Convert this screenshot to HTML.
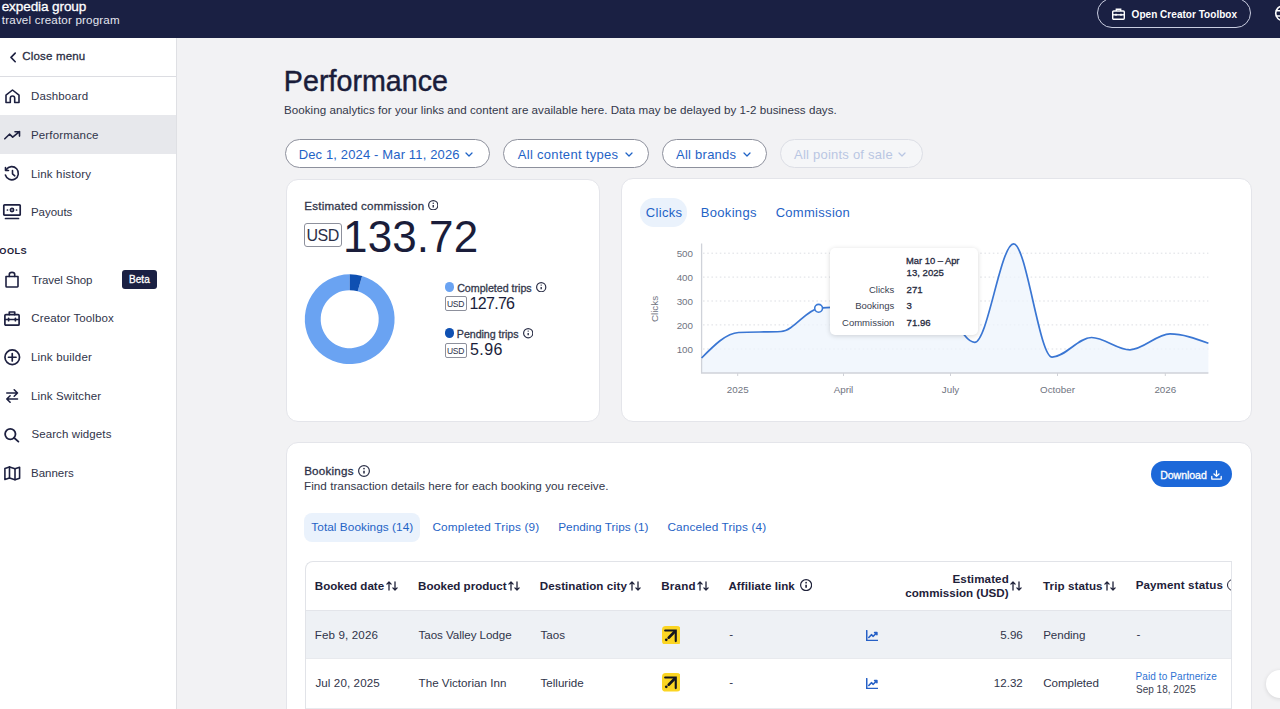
<!DOCTYPE html>
<html><head><meta charset="utf-8"><style>
html,body{margin:0;padding:0;width:1280px;height:709px;overflow:hidden;position:relative;font-family:"Liberation Sans",sans-serif;}
.t{position:absolute;white-space:nowrap;line-height:1;font-family:"Liberation Sans",sans-serif;}
</style></head><body>
<div style="position:absolute;left:0px;top:0px;width:1280px;height:709px;background:#f2f2f4"></div>
<div style="position:absolute;left:0px;top:0px;width:1280px;height:37.5px;background:#1a2043"></div>
<div class="t" style="left:1.66px;top:-0.26px;font-size:13.6px;font-weight:400;color:#ffffff;letter-spacing:-0.122px;-webkit-text-stroke:0.55px #ffffff;-webkit-text-stroke:0.3px #ffffff;">expedia group</div>
<div class="t" style="left:1.83px;top:14.28px;font-size:11.6px;font-weight:400;color:#e4e6f0;letter-spacing:0.180px;">travel creator program</div>
<div style="position:absolute;left:1097px;top:-2px;width:154px;height:30px;border:1.3px solid #c9cde0;border-radius:16px;box-sizing:border-box"></div>
<svg style="position:absolute;left:1112px;top:8px" width="13" height="12" viewBox="0 0 13 12" fill="none" stroke="#fff" stroke-width="1.4">
<rect x="0.7" y="3" width="11.6" height="8.3" rx="1"/><path d="M4.3 3V1.2h4.4V3"/><path d="M0.7 6.8h11.6"/><path d="M4 5.8v2M9 5.8v2"/></svg>
<div class="t" style="left:1131.60px;top:10.14px;font-size:10px;font-weight:700;color:#ffffff;letter-spacing:0.034px;">Open Creator Toolbox</div>
<svg style="position:absolute;left:1274px;top:5px" width="18" height="17" viewBox="0 0 18 17" fill="none" stroke="#fff" stroke-width="1.6"><circle cx="9" cy="8.3" r="7.3"/><path d="M1.8 5.8h14.4M1.8 11h14.4M9 1c-2.6 2.6-2.6 12 0 14.6"/></svg>
<div style="position:absolute;left:0px;top:37.5px;width:177px;height:672px;background:#ffffff;border-right:1.5px solid #dfe0e4;box-sizing:border-box"></div>
<div style="position:absolute;left:0px;top:75.5px;width:176px;height:1px;background:#dcdde2"></div>
<svg style="position:absolute;left:8.9px;top:52px" width="8" height="11" viewBox="0 0 8 11" fill="none" stroke="#1d2040" stroke-width="1.6" stroke-linecap="round" stroke-linejoin="round"><path d="M6.2 1.1L2 5.4l4.2 4.3"/></svg>
<div class="t" style="left:22.32px;top:51.37px;font-size:11.5px;font-weight:400;color:#2a2e44;letter-spacing:0.174px;-webkit-text-stroke:0.3px #2a2e44;">Close menu</div>
<div style="position:absolute;left:0px;top:115px;width:176px;height:39px;background:#e7e8ec"></div>
<div class="t" style="left:30.98px;top:91.17px;font-size:11.5px;font-weight:400;color:#30344a;letter-spacing:0.117px;">Dashboard</div>
<div class="t" style="left:30.98px;top:129.87px;font-size:11.5px;font-weight:400;color:#30344a;letter-spacing:0.170px;">Performance</div>
<div class="t" style="left:30.98px;top:168.87px;font-size:11.5px;font-weight:400;color:#30344a;letter-spacing:0.166px;">Link history</div>
<div class="t" style="left:30.98px;top:207.07px;font-size:11.5px;font-weight:400;color:#30344a;letter-spacing:-0.025px;">Payouts</div>
<div class="t" style="left:31.67px;top:274.77px;font-size:11.5px;font-weight:400;color:#30344a;letter-spacing:-0.079px;">Travel Shop</div>
<div class="t" style="left:31.32px;top:313.07px;font-size:11.5px;font-weight:400;color:#30344a;letter-spacing:0.102px;">Creator Toolbox</div>
<div class="t" style="left:30.98px;top:352.27px;font-size:11.5px;font-weight:400;color:#30344a;letter-spacing:0.184px;">Link builder</div>
<div class="t" style="left:30.98px;top:390.97px;font-size:11.5px;font-weight:400;color:#30344a;letter-spacing:0.152px;">Link Switcher</div>
<div class="t" style="left:31.38px;top:429.47px;font-size:11.5px;font-weight:400;color:#30344a;letter-spacing:0.109px;">Search widgets</div>
<div class="t" style="left:30.98px;top:468.17px;font-size:11.5px;font-weight:400;color:#30344a;letter-spacing:-0.002px;">Banners</div>
<div class="t" style="left:-6.60px;top:246.81px;font-size:9.2px;font-weight:700;color:#1d2038;letter-spacing:0.450px;">TOOLS</div>
<div style="position:absolute;left:122.4px;top:270px;width:34.5px;height:19px;background:#1a2043;border-radius:3px"></div>
<div class="t" style="left:128.90px;top:274.74px;font-size:10px;font-weight:400;color:#ffffff;letter-spacing:0.117px;-webkit-text-stroke:0.3px #ffffff;">Beta</div>
<svg style="position:absolute;left:4.5px;top:88.5px;overflow:visible" width="15" height="14.5" viewBox="0 0 15 14.5" fill="none" stroke="#1d2040" stroke-width="1.6" stroke-linecap="round" stroke-linejoin="round"><path d="M1 6.2L7.5 1l6.5 5.2V13.5H9.7V9.2a2.2 2.2 0 0 0-4.4 0v4.3H1z"/></svg>
<svg style="position:absolute;left:4px;top:130.8px;overflow:visible" width="16.5" height="8.5" viewBox="0 0 16.5 8.5" fill="none" stroke="#1d2040" stroke-width="1.6" stroke-linecap="round" stroke-linejoin="round"><path d="M0.8 7.8L5.5 3.2l3.2 3 6.8-5.6M11 0.8h4.5v4.3"/></svg>
<svg style="position:absolute;left:4px;top:165.7px;overflow:visible" width="16" height="15" viewBox="0 0 16 15" fill="none" stroke="#1d2040" stroke-width="1.6" stroke-linecap="round" stroke-linejoin="round"><path d="M2.3 3.5A6.6 6.6 0 1 1 1.4 9"/><path d="M1.5 1.5v3h3"/><path d="M8.5 4.5v3.3l2.3 2"/></svg>
<svg style="position:absolute;left:3.2px;top:203.8px;overflow:visible" width="18" height="16" viewBox="0 0 18 16" fill="none" stroke="#1d2040" stroke-width="1.7" stroke-linecap="round" stroke-linejoin="round"><rect x="0.8" y="0.8" width="16.4" height="10.4" rx="0.8"/><circle cx="9" cy="6" r="1.6"/><path d="M4.4 6h0.1M13.5 6h0.1M2.5 14.5h13"/></svg>
<svg style="position:absolute;left:5.2px;top:272px;overflow:visible" width="14" height="15.5" viewBox="0 0 14 15.5" fill="none" stroke="#1d2040" stroke-width="1.6" stroke-linecap="round" stroke-linejoin="round"><path d="M1 4.5h12v9.8a0.7 0.7 0 0 1-0.7 0.7H1.7a0.7 0.7 0 0 1-0.7-0.7z"/><path d="M4.3 4.5V2.4a2.7 2 0 0 1 5.4 0v2.1"/></svg>
<svg style="position:absolute;left:4.2px;top:310.5px;overflow:visible" width="16" height="15" viewBox="0 0 16 15" fill="none" stroke="#1d2040" stroke-width="1.7" stroke-linecap="round" stroke-linejoin="round"><rect x="0.9" y="3.6" width="14.2" height="10.6" rx="1"/><path d="M5.3 3.6V1h5.4v2.6"/><path d="M0.9 8.5h14.2"/><path d="M4.6 7.3v2.4M11.4 7.3v2.4"/></svg>
<svg style="position:absolute;left:3.8px;top:348.9px;overflow:visible" width="16.5" height="16.5" viewBox="0 0 16.5 16.5" fill="none" stroke="#1d2040" stroke-width="1.7" stroke-linecap="round" stroke-linejoin="round"><circle cx="8.25" cy="8.25" r="7.3"/><path d="M8.25 4.5v7.5M4.5 8.25h7.5"/></svg>
<svg style="position:absolute;left:5.7px;top:388.7px;overflow:visible" width="12.5" height="14" viewBox="0 0 12.5 14" fill="none" stroke="#1d2040" stroke-width="1.6" stroke-linecap="round" stroke-linejoin="round"><path d="M0.8 4h10.7M8.2 0.8L11.5 4 8.2 7.2M11.5 10H0.8M4.1 6.8L0.8 10l3.3 3.2"/></svg>
<svg style="position:absolute;left:3.8px;top:427.8px;overflow:visible" width="15.5" height="14" viewBox="0 0 15.5 14" fill="none" stroke="#1d2040" stroke-width="1.8" stroke-linecap="round" stroke-linejoin="round"><circle cx="6.3" cy="6.1" r="5.2"/><path d="M10 9.8l4.4 3.8"/></svg>
<svg style="position:absolute;left:3.8px;top:466px;overflow:visible" width="16.5" height="14.5" viewBox="0 0 16.5 14.5" fill="none" stroke="#1d2040" stroke-width="1.6" stroke-linecap="round" stroke-linejoin="round"><path d="M0.9 2.4L5.5 0.9l5.5 1.8 4.6-1.5v11L11 13.7l-5.5-1.8-4.6 1.5z"/><path d="M5.5 0.9v11M11 2.7v11"/></svg>
<div class="t" style="left:283.81px;top:66.69px;font-size:28.6px;font-weight:400;color:#1a1d3a;letter-spacing:0.054px;-webkit-text-stroke:0.45px #1a1d3a;">Performance</div>
<div class="t" style="left:284.07px;top:103.78px;font-size:11.6px;font-weight:400;color:#33374a;letter-spacing:0.028px;">Booking analytics for your links and content are available here. Data may be delayed by 1-2 business days.</div>
<div style="position:absolute;left:285.3px;top:139.4px;width:204.3px;height:29px;border:1px solid #8d909c;border-radius:15px;box-sizing:border-box;background:#ffffff"></div>
<div class="t" style="left:298.66px;top:148.00px;font-size:13px;font-weight:400;color:#1f63c6;letter-spacing:0.142px;">Dec 1, 2024 - Mar 11, 2026</div>
<div style="position:absolute;left:503.3px;top:139.4px;width:145.7px;height:29px;border:1px solid #8d909c;border-radius:15px;box-sizing:border-box;background:#ffffff"></div>
<div class="t" style="left:517.70px;top:148.00px;font-size:13px;font-weight:400;color:#1f63c6;letter-spacing:0.315px;">All content types</div>
<div style="position:absolute;left:662.4px;top:139.4px;width:105px;height:29px;border:1px solid #8d909c;border-radius:15px;box-sizing:border-box;background:#ffffff"></div>
<div class="t" style="left:676.00px;top:148.00px;font-size:13px;font-weight:400;color:#1f63c6;letter-spacing:0.252px;">All brands</div>
<div style="position:absolute;left:780.3px;top:139.4px;width:142.7px;height:29px;border:1px solid #dcdee5;border-radius:15px;box-sizing:border-box;background:#f5f6f8"></div>
<div class="t" style="left:794.00px;top:148.00px;font-size:13px;font-weight:400;color:#b9c6e3;letter-spacing:0.232px;">All points of sale</div>
<svg style="position:absolute;left:465.3px;top:152.3px" width="8" height="5" viewBox="0 0 8 5" fill="none" stroke="#1f63c6" stroke-width="1.25" stroke-linecap="round" stroke-linejoin="round"><path d="M1 1l3 3 3-3"/></svg>
<svg style="position:absolute;left:624.5px;top:152.3px" width="8" height="5" viewBox="0 0 8 5" fill="none" stroke="#1f63c6" stroke-width="1.25" stroke-linecap="round" stroke-linejoin="round"><path d="M1 1l3 3 3-3"/></svg>
<svg style="position:absolute;left:742.8px;top:152.3px" width="8" height="5" viewBox="0 0 8 5" fill="none" stroke="#1f63c6" stroke-width="1.25" stroke-linecap="round" stroke-linejoin="round"><path d="M1 1l3 3 3-3"/></svg>
<svg style="position:absolute;left:898px;top:152.3px" width="8" height="5" viewBox="0 0 8 5" fill="none" stroke="#b9c6e3" stroke-width="1.25" stroke-linecap="round" stroke-linejoin="round"><path d="M1 1l3 3 3-3"/></svg>
<div style="position:absolute;left:285.7px;top:178.6px;width:314.6px;height:243.8px;background:#ffffff;border:1px solid #e4e5ea;border-radius:12px;box-sizing:border-box"></div>
<div style="position:absolute;left:620.9px;top:178.2px;width:631.2px;height:244.2px;background:#ffffff;border:1px solid #e4e5ea;border-radius:12px;box-sizing:border-box"></div>
<div style="position:absolute;left:285.7px;top:442px;width:966.4px;height:300px;background:#ffffff;border:1px solid #e4e5ea;border-radius:12px;box-sizing:border-box"></div>
<div class="t" style="left:304.27px;top:200.38px;font-size:11.6px;font-weight:400;color:#34384c;letter-spacing:0.204px;-webkit-text-stroke:0.3px #34384c;">Estimated commission</div>
<svg style="position:absolute;left:427.8px;top:199.6px" width="10.5" height="10.5" viewBox="0 0 10.5 10.5" fill="none" stroke="#2c3048" stroke-width="1.25"><circle cx="5.25" cy="5.25" r="4.625"/><path d="M5.25 5.05V7.45" stroke-width="1.40"/><circle cx="5.25" cy="3.15" r="0.75" fill="#2c3048" stroke="none"/></svg>
<div style="position:absolute;left:304.3px;top:223.4px;width:37.6px;height:24.1px;border:1px solid #8d909c;border-radius:3px;box-sizing:border-box"></div>
<div class="t" style="left:306.40px;top:227.86px;font-size:16px;font-weight:400;color:#2c3048;letter-spacing:-0.420px;">USD</div>
<div class="t" style="left:343.10px;top:214.85px;font-size:44px;font-weight:400;color:#1a1d3a;letter-spacing:0.092px;">133.72</div>
<svg style="position:absolute;left:0;top:0" width="1280" height="709"><path d="M362.11 276.05A44.9 44.9 0 1 1 349.70 274.30L349.70 290.20A29.0 29.0 0 1 0 357.72 291.33Z" fill="#6aa3f2"/><path d="M349.70 274.30A44.9 44.9 0 0 1 362.11 276.05L357.72 291.33A29.0 29.0 0 0 0 349.70 290.20Z" fill="#0f50b2"/></svg>
<div style="position:absolute;left:444.7px;top:282.4px;width:9.6px;height:9.6px;background:#6aa3f2;border-radius:50%"></div>
<div class="t" style="left:457.16px;top:282.74px;font-size:10.7px;font-weight:400;color:#34384c;letter-spacing:-0.025px;-webkit-text-stroke:0.3px #34384c;">Completed trips</div>
<svg style="position:absolute;left:536.2px;top:282px" width="10.4" height="10.4" viewBox="0 0 10.4 10.4" fill="none" stroke="#2c3048" stroke-width="1.2"><circle cx="5.2" cy="5.2" r="4.6000000000000005"/><path d="M5.2 5.00V7.38" stroke-width="1.39"/><circle cx="5.2" cy="3.12" r="0.74" fill="#2c3048" stroke="none"/></svg>
<div style="position:absolute;left:444.7px;top:296.2px;width:22.2px;height:14.6px;border:1px solid #8d909c;border-radius:2px;box-sizing:border-box"></div>
<div class="t" style="left:446.96px;top:299.80px;font-size:8.5px;font-weight:400;color:#2c3048;letter-spacing:-0.258px;">USD</div>
<div class="t" style="left:469.50px;top:295.96px;font-size:16px;font-weight:400;color:#1a1d3a;letter-spacing:-0.684px;">127.76</div>
<div style="position:absolute;left:444.7px;top:328.2px;width:9.6px;height:9.6px;background:#0f50b2;border-radius:50%"></div>
<div class="t" style="left:456.84px;top:329.04px;font-size:10.7px;font-weight:400;color:#34384c;letter-spacing:-0.059px;-webkit-text-stroke:0.3px #34384c;">Pending trips</div>
<svg style="position:absolute;left:522.7px;top:328.3px" width="10.4" height="10.4" viewBox="0 0 10.4 10.4" fill="none" stroke="#2c3048" stroke-width="1.2"><circle cx="5.2" cy="5.2" r="4.6000000000000005"/><path d="M5.2 5.00V7.38" stroke-width="1.39"/><circle cx="5.2" cy="3.12" r="0.74" fill="#2c3048" stroke="none"/></svg>
<div style="position:absolute;left:444.7px;top:343.1px;width:22.2px;height:14.5px;border:1px solid #8d909c;border-radius:2px;box-sizing:border-box"></div>
<div class="t" style="left:446.96px;top:346.50px;font-size:8.5px;font-weight:400;color:#2c3048;letter-spacing:-0.258px;">USD</div>
<div class="t" style="left:470.06px;top:342.46px;font-size:16px;font-weight:400;color:#1a1d3a;letter-spacing:0.420px;">5.96</div>
<div style="position:absolute;left:640.3px;top:197.9px;width:47px;height:28.7px;background:#eaf2fc;border-radius:14px"></div>
<div class="t" style="left:645.85px;top:206.20px;font-size:13px;font-weight:400;color:#1f63c6;letter-spacing:0.312px;">Clicks</div>
<div class="t" style="left:700.76px;top:206.20px;font-size:13px;font-weight:400;color:#1f63c6;letter-spacing:0.314px;">Bookings</div>
<div class="t" style="left:775.65px;top:206.20px;font-size:13px;font-weight:400;color:#1f63c6;letter-spacing:0.299px;">Commission</div>
<div class="t" style="right:587.00px;top:248.90px;font-size:9.8px;font-weight:400;color:#70747f;letter-spacing:0.000px;">500</div>
<div class="t" style="right:587.00px;top:272.80px;font-size:9.8px;font-weight:400;color:#70747f;letter-spacing:0.000px;">400</div>
<div class="t" style="right:587.00px;top:296.70px;font-size:9.8px;font-weight:400;color:#70747f;letter-spacing:0.000px;">300</div>
<div class="t" style="right:587.00px;top:320.60px;font-size:9.8px;font-weight:400;color:#70747f;letter-spacing:0.000px;">200</div>
<div class="t" style="right:587.00px;top:344.70px;font-size:9.8px;font-weight:400;color:#70747f;letter-spacing:0.000px;">100</div>
<div class="t" style="left:655px;top:308.5px;font-size:9.8px;color:#70747f;transform:translate(-50%,-50%) rotate(-90deg)">Clicks</div>
<div class="t" style="left:737.70px;transform:translateX(-50%);top:384.90px;font-size:9.8px;font-weight:400;color:#70747f;letter-spacing:0.000px;">2025</div>
<div class="t" style="left:843.50px;transform:translateX(-50%);top:384.90px;font-size:9.8px;font-weight:400;color:#70747f;letter-spacing:0.000px;">April</div>
<div class="t" style="left:950.50px;transform:translateX(-50%);top:384.90px;font-size:9.8px;font-weight:400;color:#70747f;letter-spacing:0.000px;">July</div>
<div class="t" style="left:1057.50px;transform:translateX(-50%);top:384.90px;font-size:9.8px;font-weight:400;color:#70747f;letter-spacing:0.000px;">October</div>
<div class="t" style="left:1165.30px;transform:translateX(-50%);top:384.90px;font-size:9.8px;font-weight:400;color:#70747f;letter-spacing:0.000px;">2026</div>
<svg style="position:absolute;left:0;top:0" width="1280" height="709">
<path d="M703 253.2H1208.4" stroke="#dddfe4" stroke-width="1" stroke-dasharray="1.6 2.6"/><path d="M703 277.1H1208.4" stroke="#dddfe4" stroke-width="1" stroke-dasharray="1.6 2.6"/><path d="M703 301.0H1208.4" stroke="#dddfe4" stroke-width="1" stroke-dasharray="1.6 2.6"/><path d="M703 324.9H1208.4" stroke="#dddfe4" stroke-width="1" stroke-dasharray="1.6 2.6"/><path d="M703 349.0H1208.4" stroke="#dddfe4" stroke-width="1" stroke-dasharray="1.6 2.6"/>
<path d="M701.6 358 C713.90 345.54 726.20 333.08 738.5 332.5 C752.67 331.83 766.83 332.17 781 331.5 C793.53 330.91 806.07 309.80 818.6 308.3 C831.40 306.77 844.20 307.53 857 306 C869.83 304.46 882.67 292.00 895.5 292 C908.50 292.00 921.50 293.33 934.5 296 C947.90 298.75 961.30 342.30 974.7 342.3 C987.67 342.30 1000.63 243.90 1013.6 243.9 C1026.43 243.90 1039.27 357.10 1052.1 357.1 C1065.27 357.10 1078.43 337.50 1091.6 337.5 C1104.40 337.50 1117.20 349.80 1130 349.8 C1143.33 349.80 1156.67 333.90 1170 333.9 C1182.80 333.90 1195.60 338.55 1208.4 343.2 L1208.4 373 L701.6 373Z" fill="#eef4fc" fill-opacity="0.75"/>
<path d="M701.6 243.5V373H1208.4" stroke="#cfd2d9" stroke-width="1.3" fill="none"/>
<path d="M737.7 373v3" stroke="#d0d2d8" stroke-width="1"/><path d="M843.5 373v3" stroke="#d0d2d8" stroke-width="1"/><path d="M950.5 373v3" stroke="#d0d2d8" stroke-width="1"/><path d="M1057.5 373v3" stroke="#d0d2d8" stroke-width="1"/><path d="M1165.3 373v3" stroke="#d0d2d8" stroke-width="1"/>
<path d="M701.6 358 C713.90 345.54 726.20 333.08 738.5 332.5 C752.67 331.83 766.83 332.17 781 331.5 C793.53 330.91 806.07 309.80 818.6 308.3 C831.40 306.77 844.20 307.53 857 306 C869.83 304.46 882.67 292.00 895.5 292 C908.50 292.00 921.50 293.33 934.5 296 C947.90 298.75 961.30 342.30 974.7 342.3 C987.67 342.30 1000.63 243.90 1013.6 243.9 C1026.43 243.90 1039.27 357.10 1052.1 357.1 C1065.27 357.10 1078.43 337.50 1091.6 337.5 C1104.40 337.50 1117.20 349.80 1130 349.8 C1143.33 349.80 1156.67 333.90 1170 333.9 C1182.80 333.90 1195.60 338.55 1208.4 343.2" stroke="#3a76d3" stroke-width="1.7" fill="none"/>
<circle cx="818.6" cy="308.3" r="3.9" fill="#fff" stroke="#3b7ad6" stroke-width="1.6"/>
</svg>
<div style="position:absolute;left:829.7px;top:248.2px;width:148.4px;height:87.3px;background:#ffffff;border-radius:5px;box-shadow:0 1px 5px rgba(0,0,0,0.16)"></div>
<div class="t" style="left:906.05px;top:256.04px;font-size:9.4px;font-weight:400;color:#262a3e;letter-spacing:-0.025px;-webkit-text-stroke:0.3px #262a3e;">Mar 10 – Apr</div>
<div class="t" style="left:906.60px;top:267.77px;font-size:9.6px;font-weight:400;color:#262a3e;letter-spacing:0.000px;-webkit-text-stroke:0.3px #262a3e;">13, 2025</div>
<div class="t" style="right:385.70px;top:284.66px;font-size:9.5px;font-weight:400;color:#3a3e50;letter-spacing:0.000px;">Clicks</div>
<div class="t" style="left:906.60px;top:284.57px;font-size:9.6px;font-weight:400;color:#262a3e;letter-spacing:0.000px;-webkit-text-stroke:0.3px #262a3e;">271</div>
<div class="t" style="right:385.70px;top:301.26px;font-size:9.5px;font-weight:400;color:#3a3e50;letter-spacing:0.000px;">Bookings</div>
<div class="t" style="left:906.60px;top:301.17px;font-size:9.6px;font-weight:400;color:#262a3e;letter-spacing:0.000px;-webkit-text-stroke:0.3px #262a3e;">3</div>
<div class="t" style="right:385.70px;top:318.06px;font-size:9.5px;font-weight:400;color:#3a3e50;letter-spacing:0.000px;">Commission</div>
<div class="t" style="left:906.60px;top:317.97px;font-size:9.6px;font-weight:400;color:#262a3e;letter-spacing:0.000px;-webkit-text-stroke:0.3px #262a3e;">71.96</div>
<div class="t" style="left:304.17px;top:464.78px;font-size:11.6px;font-weight:400;color:#2c3048;letter-spacing:0.229px;-webkit-text-stroke:0.3px #2c3048;">Bookings</div>
<svg style="position:absolute;left:358px;top:464.7px" width="12" height="12" viewBox="0 0 12 12" fill="none" stroke="#2c3048" stroke-width="1.2"><circle cx="6.0" cy="6.0" r="5.4"/><path d="M6.0 5.77V8.51" stroke-width="1.60"/><circle cx="6.0" cy="3.60" r="0.86" fill="#2c3048" stroke="none"/></svg>
<div class="t" style="left:304.06px;top:479.80px;font-size:11.7px;font-weight:400;color:#33374a;letter-spacing:0.029px;">Find transaction details here for each booking you receive.</div>
<div style="position:absolute;left:1151px;top:461.4px;width:81.3px;height:25.6px;background:#1c68d9;border-radius:13px"></div>
<div class="t" style="left:1160.15px;top:469.73px;font-size:10.6px;font-weight:400;color:#ffffff;letter-spacing:-0.069px;-webkit-text-stroke:0.3px #ffffff;">Download</div>
<svg style="position:absolute;left:1211px;top:469.5px" width="11" height="10" viewBox="0 0 11 10" fill="none" stroke="#fff" stroke-width="1.3" stroke-linecap="round" stroke-linejoin="round"><path d="M5.5 0.7v5.6M3 4l2.5 2.4L8 4M0.8 6.5v2.6h9.4V6.5"/></svg>
<div style="position:absolute;left:304.1px;top:513px;width:115.9px;height:28.6px;background:#eaf2fc;border-radius:8px"></div>
<div class="t" style="left:311.36px;top:521.51px;font-size:11.8px;font-weight:400;color:#1f63c6;letter-spacing:0.050px;">Total Bookings (14)</div>
<div class="t" style="left:432.41px;top:521.51px;font-size:11.8px;font-weight:400;color:#1f63c6;letter-spacing:0.183px;">Completed Trips (9)</div>
<div class="t" style="left:558.16px;top:521.51px;font-size:11.8px;font-weight:400;color:#1f63c6;letter-spacing:0.028px;">Pending Trips (1)</div>
<div class="t" style="left:667.41px;top:521.51px;font-size:11.8px;font-weight:400;color:#1f63c6;letter-spacing:0.144px;">Canceled Trips (4)</div>
<div style="position:absolute;left:304.8px;top:561.3px;width:927px;height:200px;border:1px solid #e1e3e8;border-right:none;border-radius:8px 0 0 0;box-sizing:border-box;background:#fff"></div>
<div style="position:absolute;left:305.8px;top:610.4px;width:926px;height:48px;background:#eef1f5"></div>
<div style="position:absolute;left:305.8px;top:610px;width:926px;height:1px;background:#e3e5ea"></div>
<div style="position:absolute;left:305.8px;top:658.2px;width:926px;height:1px;background:#e8eaee"></div>
<div style="position:absolute;left:305.8px;top:707.6px;width:926px;height:1px;background:#e8eaee"></div>
<div class="t" style="left:314.85px;top:580.38px;font-size:11.6px;font-weight:700;color:#1e2139;letter-spacing:-0.034px;">Booked date</div>
<svg style="position:absolute;left:385.5px;top:581px" width="12" height="10" viewBox="0 0 12 10" fill="none" stroke="#1e2139" stroke-width="1.3" stroke-linecap="round" stroke-linejoin="round"><path d="M3 9V1M0.9 3.1L3 1l2.1 2.1M9 1v8M6.9 6.9L9 9l2.1-2.1"/></svg>
<div class="t" style="left:418.05px;top:580.38px;font-size:11.6px;font-weight:700;color:#1e2139;letter-spacing:-0.026px;">Booked product</div>
<svg style="position:absolute;left:508.29999999999995px;top:581px" width="12" height="10" viewBox="0 0 12 10" fill="none" stroke="#1e2139" stroke-width="1.3" stroke-linecap="round" stroke-linejoin="round"><path d="M3 9V1M0.9 3.1L3 1l2.1 2.1M9 1v8M6.9 6.9L9 9l2.1-2.1"/></svg>
<div class="t" style="left:539.75px;top:580.38px;font-size:11.6px;font-weight:700;color:#1e2139;letter-spacing:0.050px;">Destination city</div>
<svg style="position:absolute;left:628.6px;top:581px" width="12" height="10" viewBox="0 0 12 10" fill="none" stroke="#1e2139" stroke-width="1.3" stroke-linecap="round" stroke-linejoin="round"><path d="M3 9V1M0.9 3.1L3 1l2.1 2.1M9 1v8M6.9 6.9L9 9l2.1-2.1"/></svg>
<div class="t" style="left:661.25px;top:580.38px;font-size:11.6px;font-weight:700;color:#1e2139;letter-spacing:0.196px;">Brand</div>
<svg style="position:absolute;left:696.6px;top:581px" width="12" height="10" viewBox="0 0 12 10" fill="none" stroke="#1e2139" stroke-width="1.3" stroke-linecap="round" stroke-linejoin="round"><path d="M3 9V1M0.9 3.1L3 1l2.1 2.1M9 1v8M6.9 6.9L9 9l2.1-2.1"/></svg>
<div class="t" style="left:728.41px;top:580.18px;font-size:11.6px;font-weight:700;color:#1e2139;letter-spacing:0.052px;">Affiliate link</div>
<svg style="position:absolute;left:799.5px;top:579.3px" width="12.2" height="12.2" viewBox="0 0 12.2 12.2" fill="none" stroke="#1e2139" stroke-width="1.2"><circle cx="6.1" cy="6.1" r="5.5"/><path d="M6.1 5.87V8.66" stroke-width="1.63"/><circle cx="6.1" cy="3.66" r="0.87" fill="#1e2139" stroke="none"/></svg>
<div class="t" style="left:952.55px;top:572.68px;font-size:11.6px;font-weight:700;color:#1e2139;letter-spacing:0.095px;">Estimated</div>
<div class="t" style="left:905.34px;top:587.38px;font-size:11.6px;font-weight:700;color:#1e2139;letter-spacing:0.008px;">commission (USD)</div>
<svg style="position:absolute;left:1010.3px;top:581px" width="12" height="10" viewBox="0 0 12 10" fill="none" stroke="#1e2139" stroke-width="1.3" stroke-linecap="round" stroke-linejoin="round"><path d="M3 9V1M0.9 3.1L3 1l2.1 2.1M9 1v8M6.9 6.9L9 9l2.1-2.1"/></svg>
<div class="t" style="left:1043.08px;top:580.38px;font-size:11.6px;font-weight:700;color:#1e2139;letter-spacing:0.084px;">Trip status</div>
<svg style="position:absolute;left:1103.9px;top:581px" width="12" height="10" viewBox="0 0 12 10" fill="none" stroke="#1e2139" stroke-width="1.3" stroke-linecap="round" stroke-linejoin="round"><path d="M3 9V1M0.9 3.1L3 1l2.1 2.1M9 1v8M6.9 6.9L9 9l2.1-2.1"/></svg>
<div class="t" style="left:1135.65px;top:579.18px;font-size:11.6px;font-weight:700;color:#1e2139;letter-spacing:0.115px;">Payment status</div>
<div style="position:absolute;left:1226.5px;top:579px;width:12px;height:12px;border:1.2px solid #1e2139;border-radius:50%;box-sizing:border-box"></div>
<div style="position:absolute;left:1231.6px;top:561.5px;width:19px;height:150px;background:#ffffff"></div>
<div style="position:absolute;left:1231.4px;top:561.5px;width:1px;height:150px;background:#e3e5ea"></div>
<div class="t" style="left:314.67px;top:629.48px;font-size:11.6px;font-weight:400;color:#30344a;letter-spacing:0.141px;">Feb 9, 2026</div>
<div class="t" style="left:418.57px;top:629.48px;font-size:11.6px;font-weight:400;color:#30344a;letter-spacing:-0.053px;">Taos Valley Lodge</div>
<div class="t" style="left:540.50px;top:629.48px;font-size:11.6px;font-weight:400;color:#30344a;letter-spacing:0.000px;">Taos</div>
<div class="t" style="left:729.20px;top:628.48px;font-size:11.6px;font-weight:400;color:#30344a;letter-spacing:0.000px;">-</div>
<div class="t" style="right:257.20px;top:629.48px;font-size:11.6px;font-weight:400;color:#30344a;letter-spacing:0.000px;">5.96</div>
<div class="t" style="left:1043.20px;top:629.48px;font-size:11.6px;font-weight:400;color:#30344a;letter-spacing:-0.050px;">Pending</div>
<div class="t" style="left:1136.40px;top:628.48px;font-size:11.6px;font-weight:400;color:#30344a;letter-spacing:0.000px;">-</div>
<svg style="position:absolute;left:661.8px;top:625.5px" width="18.6" height="18.6" viewBox="0 0 20 20"><rect width="20" height="20" rx="4" fill="#fbd523"/><path d="M3.4 4.9h11.4v11.3" fill="none" stroke="#15161f" stroke-width="2.3" stroke-linecap="round" stroke-linejoin="miter"/><path d="M13.8 5.9L7.2 12.6" stroke="#15161f" stroke-width="2.8" stroke-linecap="round"/><circle cx="4.6" cy="14.9" r="1.45" fill="#15161f"/></svg>
<svg style="position:absolute;left:865.8px;top:630.0px" width="12.5" height="11.3" viewBox="0 0 12.5 11.3" fill="none" stroke="#2660c6" stroke-width="1.6" stroke-linecap="round" stroke-linejoin="round"><path d="M0.7 0.7v9.9h11.1"/><path d="M2.8 7.5l2.6-2.8 1.8 1.6 3.6-3.6M8.6 2.6h2.3v2.2"/></svg>
<div class="t" style="left:315.43px;top:677.18px;font-size:11.6px;font-weight:400;color:#30344a;letter-spacing:0.102px;">Jul 20, 2025</div>
<div class="t" style="left:418.57px;top:677.18px;font-size:11.6px;font-weight:400;color:#30344a;letter-spacing:0.026px;">The Victorian Inn</div>
<div class="t" style="left:540.50px;top:677.18px;font-size:11.6px;font-weight:400;color:#30344a;letter-spacing:0.000px;">Telluride</div>
<div class="t" style="left:729.20px;top:676.18px;font-size:11.6px;font-weight:400;color:#30344a;letter-spacing:0.000px;">-</div>
<div class="t" style="right:257.20px;top:677.18px;font-size:11.6px;font-weight:400;color:#30344a;letter-spacing:0.000px;">12.32</div>
<div class="t" style="left:1043.20px;top:677.18px;font-size:11.6px;font-weight:400;color:#30344a;letter-spacing:-0.050px;">Completed</div>
<svg style="position:absolute;left:661.8px;top:673.2px" width="18.6" height="18.6" viewBox="0 0 20 20"><rect width="20" height="20" rx="4" fill="#fbd523"/><path d="M3.4 4.9h11.4v11.3" fill="none" stroke="#15161f" stroke-width="2.3" stroke-linecap="round" stroke-linejoin="miter"/><path d="M13.8 5.9L7.2 12.6" stroke="#15161f" stroke-width="2.8" stroke-linecap="round"/><circle cx="4.6" cy="14.9" r="1.45" fill="#15161f"/></svg>
<svg style="position:absolute;left:865.8px;top:677.7px" width="12.5" height="11.3" viewBox="0 0 12.5 11.3" fill="none" stroke="#2660c6" stroke-width="1.6" stroke-linecap="round" stroke-linejoin="round"><path d="M0.7 0.7v9.9h11.1"/><path d="M2.8 7.5l2.6-2.8 1.8 1.6 3.6-3.6M8.6 2.6h2.3v2.2"/></svg>
<div class="t" style="left:1135.60px;top:672.43px;font-size:10px;font-weight:400;color:#2f73d4;letter-spacing:0.097px;">Paid to Partnerize</div>
<div class="t" style="left:1135.95px;top:685.03px;font-size:10px;font-weight:400;color:#3a3e50;letter-spacing:0.023px;">Sep 18, 2025</div>
<div style="position:absolute;left:1266px;top:669.5px;width:28px;height:28px;border-radius:50%;background:#fff;box-shadow:0 1px 4px rgba(0,0,0,0.12)"></div>
</body></html>
